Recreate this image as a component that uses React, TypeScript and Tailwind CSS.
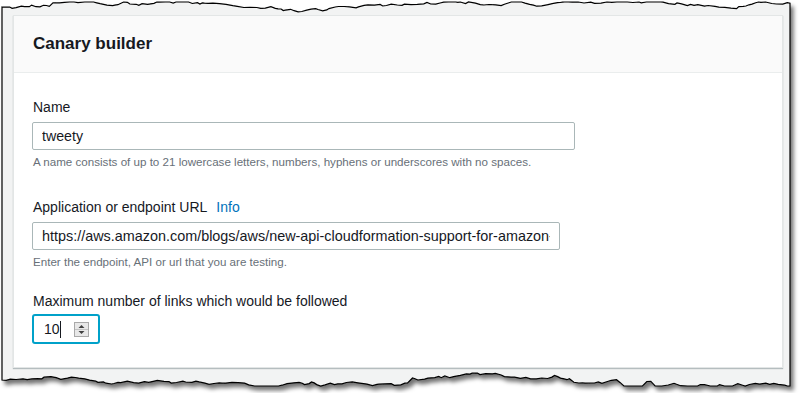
import React from 'react';

const FONT = { fontFamily: '"Liberation Sans", Arial, sans-serif' };

// torn paper edge, generated once with a fixed seed
function makeRng(seed: number) {
  let s = seed;
  return () => {
    s = (s * 9301 + 49297) % 233280;
    return s / 233280;
  };
}

function tornEdge(seed: number, x0: number, x1: number, base: number, min: number, max: number) {
  const r = makeRng(seed);
  const pts: [number, number][] = [];
  let y = base;
  let x = x0;
  while (x < x1) {
    pts.push([x, y]);
    x += 2 + r() * 5;
    y += (r() - 0.5) * 3.4;
    if (r() > 0.92) y += (r() - 0.5) * 8;
    y = Math.max(min, Math.min(max, y));
  }
  pts.push([x1, y]);
  return pts;
}

const topPts = tornEdge(7, 2, 790, 7, 2, 12);
const bottomPts = tornEdge(31, 2, 790, 380, 373, 386).reverse();
const paperPath =
  'M ' +
  topPts.map(([x, y]) => `${x.toFixed(1)} ${y.toFixed(1)}`).join(' L ') +
  ' L ' +
  bottomPts.map(([x, y]) => `${x.toFixed(1)} ${y.toFixed(1)}`).join(' L ') +
  ' Z';

function Paper() {
  return (
    <svg className="absolute inset-0" width="801" height="393" viewBox="0 0 801 393">
      <defs>
        <filter id="paperShadow" x="-5%" y="-5%" width="110%" height="115%">
          <feDropShadow dx="3" dy="4" stdDeviation="2" floodColor="#000" floodOpacity="0.55" />
        </filter>
      </defs>
      <path d={paperPath} fill="#f2f3f3" stroke="#000" strokeWidth="1.2" filter="url(#paperShadow)" />
    </svg>
  );
}

function Label({ children }: { children: React.ReactNode }) {
  return <div className="text-[14px] leading-[20px] text-[#16191f]">{children}</div>;
}

function Hint({ children }: { children: React.ReactNode }) {
  return <div className="mt-[4px] text-[11.6px] leading-[16px] text-[#687078]">{children}</div>;
}

function Spinner() {
  return (
    <svg width="15" height="15" viewBox="0 0 15 15">
      <rect x="0.5" y="0.5" width="14" height="14" fill="#e8e8e8" stroke="#a9a9a9" />
      <line x1="1" y1="7.5" x2="14" y2="7.5" stroke="#c4c4c4" />
      <path d="M4.5 6 L7.5 3 L10.5 6 Z" fill="#404040" />
      <path d="M4.5 9 L7.5 12 L10.5 9 Z" fill="#404040" />
    </svg>
  );
}

export default function App() {
  return (
    <div className="relative w-[801px] h-[393px] bg-white overflow-hidden" style={FONT}>
      <Paper />
      <section className="relative ml-[13px] mt-[15px] w-[770px] h-[353px] bg-white border border-[#e3e6e6] shadow-[0_1px_1px_0_rgba(0,28,36,0.25)]">
        <header className="h-[57px] bg-[#fafafa] border-b border-[#eaeded] px-[19px] flex items-center">
          <h2 className="text-[17px] font-bold text-[#16191f]">Canary builder</h2>
        </header>
        <div className="pl-[19px] pt-[24px] flex flex-col">
          <Label>Name</Label>
          <input
            defaultValue="tweety"
            className="mt-[5px] w-[543px] h-[28px] -ml-[1px] px-[9px] border border-[#aab7b8] rounded-[2px] text-[14.2px] text-[#16191f] outline-none"
          />
          <Hint>A name consists of up to 21 lowercase letters, numbers, hyphens or underscores with no spaces.</Hint>

          <div className="mt-[27px]">
            <Label>
              Application or endpoint URL
              <a className="ml-[9px] text-[#0073bb]">Info</a>
            </Label>
          </div>
          <input
            defaultValue="https://aws.amazon.com/blogs/aws/new-api-cloudformation-support-for-amazon-cloudwatch-synthetics/"
            className="mt-[5px] w-[528px] h-[28px] -ml-[1px] px-[9px] border border-[#aab7b8] rounded-[2px] text-[14.4px] text-[#16191f] outline-none"
          />
          <Hint>Enter the endpoint, API or url that you are testing.</Hint>

          <div className="mt-[21px]">
            <Label>Maximum number of links which would be followed</Label>
          </div>
          <div className="mt-[3px] -ml-[1px] w-[68px] h-[30px] border-2 border-[#00a1c9] rounded-[3px] flex items-center pl-[10px]">
            <span className="text-[14px] text-[#16191f]">10</span>
            <span className="w-[1px] h-[17px] bg-[#16191f]" />
            <span className="ml-[13px] flex">
              <Spinner />
            </span>
          </div>
        </div>
      </section>
    </div>
  );
}
